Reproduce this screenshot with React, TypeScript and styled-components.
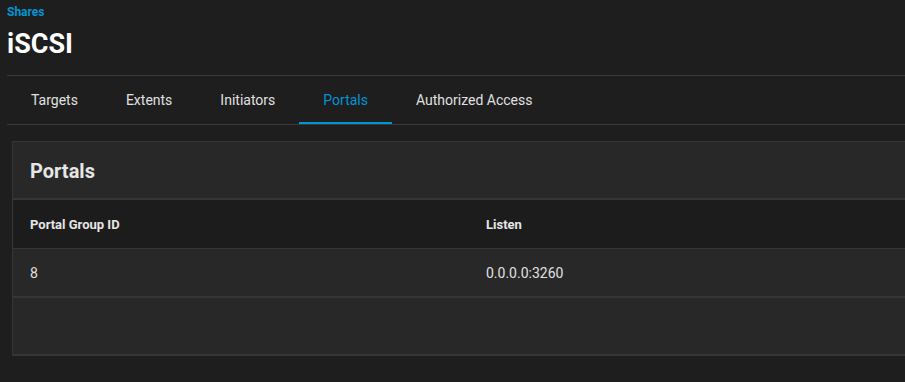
import React from "react";
import styled, { createGlobalStyle } from "styled-components";

const Global = createGlobalStyle`
  html, body {
    margin: 0;
    padding: 0;
    background: #1e1e1e;
    overflow: hidden;
  }
  body {
    font-family: Roboto, "Liberation Sans", sans-serif;
    color: #e0e0e0;
  }
`;

const Page = styled.div`
  width: 938px;
  padding: 0 7px;
  box-sizing: border-box;
`;

const Breadcrumb = styled.a`
  display: block;
  padding-top: 5px;
  font-size: 12px;
  line-height: 15px;
  font-weight: 700;
  color: #0095d5;
  text-decoration: none;
`;

const Title = styled.h1`
  margin: 0;
  padding-top: 7px;
  font-size: 27px;
  line-height: 34px;
  font-weight: 700;
  color: #ffffff;
  box-sizing: border-box;
  border-bottom: 1px solid #3a3a3a;
  height: 56px;
`;

const Tabs = styled.nav`
  display: flex;
  height: 49px;
  border-bottom: 1px solid #3a3a3a;
  box-sizing: border-box;
`;

const Tab = styled.div<{ $active?: boolean }>`
  padding: 2px 24px 0;
  display: flex;
  align-items: center;
  font-size: 14px;
  color: ${(p) => (p.$active ? "#0095d5" : "#e0e0e0")};
  border-bottom: 2px solid ${(p) => (p.$active ? "#0095d5" : "transparent")};
  box-sizing: border-box;
  height: 48px;
`;

const Card = styled.section`
  margin: 16px 5px 0;
  background: #282828;
  border: 1px solid #363636;
  border-bottom-width: 2px;
`;

const CardHeader = styled.div`
  height: 56px;
  display: flex;
  align-items: center;
  padding: 2px 17px 0;
  box-sizing: border-box;
  border-bottom: 2px solid #363636;
  box-sizing: content-box;
  height: 54px;
`;

const CardTitle = styled.h2`
  margin: 0;
  font-size: 20px;
  font-weight: 700;
  color: #e6e6e6;
`;

const Row = styled.div<{ $head?: boolean }>`
  display: grid;
  grid-template-columns: 1fr 1fr;
  height: 49px;
  background: ${(p) => (p.$head ? "#1c1c1c" : "#282828")};
  border-bottom: ${(p) => (p.$head ? "1px" : "2px")} solid #363636;
  box-sizing: border-box;
`;

const Cell = styled.div<{ $head?: boolean }>`
  display: flex;
  align-items: center;
  padding-left: 17px;
  font-size: ${(p) => (p.$head ? "13px" : "14px")};
  font-weight: ${(p) => (p.$head ? 700 : 400)};
  color: ${(p) => (p.$head ? "#e6e6e6" : "#e0e0e0")};
`;

const Empty = styled.div`
  height: 56px;
`;

export default function App() {
  return (
    <>
      <Global />
      <Page>
        <Breadcrumb>Shares</Breadcrumb>
        <Title>iSCSI</Title>
        <Tabs>
          <Tab>Targets</Tab>
          <Tab>Extents</Tab>
          <Tab>Initiators</Tab>
          <Tab $active>Portals</Tab>
          <Tab>Authorized Access</Tab>
        </Tabs>
        <Card>
          <CardHeader>
            <CardTitle>Portals</CardTitle>
          </CardHeader>
          <Row $head>
            <Cell $head>Portal Group ID</Cell>
            <Cell $head>Listen</Cell>
          </Row>
          <Row>
            <Cell>8</Cell>
            <Cell>0.0.0.0:3260</Cell>
          </Row>
          <Empty />
        </Card>
      </Page>
    </>
  );
}
